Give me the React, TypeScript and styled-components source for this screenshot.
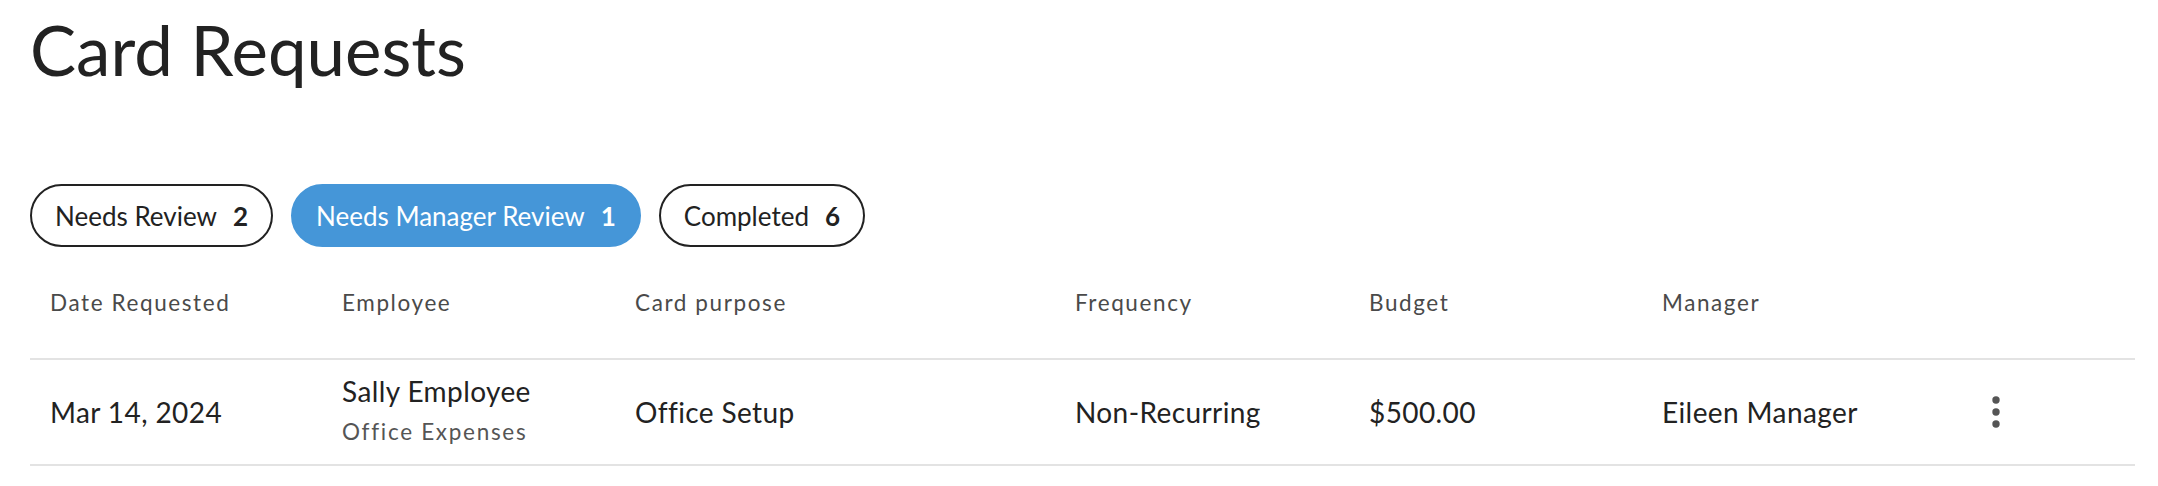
import React from "react";
import styled, { createGlobalStyle } from "styled-components";

const GlobalStyle = createGlobalStyle`
  html, body {
    margin: 0;
    padding: 0;
    background: #ffffff;
  }
  body {
    font-family: Lato, "Noto Sans", "Liberation Sans", sans-serif;
    color: #222222;
  }
`;

const Page = styled.div`
  padding: 8px 23px 0 30px;
`;

const Title = styled.h1`
  margin: 0;
  font-size: 69px;
  font-weight: 400;
  line-height: 83px;
  color: #222222;
  letter-spacing: 0;
`;

const Tabs = styled.div`
  display: flex;
  gap: 18px;
  margin-top: 93px;
`;

const Pill = styled.button<{ $active?: boolean }>`
  display: inline-flex;
  align-items: center;
  gap: 16px;
  height: 63px;
  box-sizing: border-box;
  padding: 0 23px;
  border-radius: 999px;
  border: 2px solid ${(p) => (p.$active ? "#4596d8" : "#222222")};
  background: ${(p) => (p.$active ? "#4596d8" : "#ffffff")};
  color: ${(p) => (p.$active ? "#ffffff" : "#222222")};
  font-family: inherit;
  font-size: 26px;
  font-weight: 400;
  cursor: pointer;
`;

const Count = styled.span`
  font-weight: 700;
`;

const Table = styled.div`
  display: grid;
  grid-template-columns: 292px 293px 440px 294px 293px 293px 1fr;
`;

const HeadCell = styled.div`
  display: flex;
  align-items: center;
  height: 111px;
  padding: 0 20px;
  font-size: 22.5px;
  letter-spacing: 1.6px;
  color: #4a4a4a;
  white-space: nowrap;
  border-bottom: 2px solid #e3e3e3;
`;

const Cell = styled.div`
  display: flex;
  flex-direction: column;
  justify-content: center;
  height: 104px;
  padding: 0 20px;
  font-size: 28px;
  letter-spacing: 0.4px;
  color: #222222;
  white-space: nowrap;
  border-bottom: 2px solid #e3e3e3;
`;

const Name = styled.div`
  line-height: 39px;
`;

const Sub = styled.div`
  font-size: 22.5px;
  letter-spacing: 1.7px;
  line-height: 41px;
  color: #555555;
`;

const MenuCell = styled.div`
  display: flex;
  align-items: center;
  height: 104px;
  padding-left: 37px;
  border-bottom: 2px solid #e3e3e3;
`;

const IconButton = styled.button`
  width: 48px;
  height: 48px;
  display: flex;
  align-items: center;
  justify-content: center;
  border: none;
  background: transparent;
  padding: 0;
  cursor: pointer;
`;

const KebabIcon = () => (
  <svg width="10" height="34" viewBox="0 0 10 34" aria-hidden="true">
    <circle cx="5" cy="5" r="3.7" fill="#555555" />
    <circle cx="5" cy="17" r="3.7" fill="#555555" />
    <circle cx="5" cy="29" r="3.7" fill="#555555" />
  </svg>
);

const tabs = [
  { label: "Needs Review", count: 2, active: false },
  { label: "Needs Manager Review", count: 1, active: true },
  { label: "Completed", count: 6, active: false },
];

const headers = ["Date Requested", "Employee", "Card purpose", "Frequency", "Budget", "Manager", ""];

export default function App() {
  return (
    <>
      <GlobalStyle />
      <Page>
        <Title>Card Requests</Title>
        <Tabs>
          {tabs.map((t) => (
            <Pill key={t.label} $active={t.active}>
              <span>{t.label}</span>
              <Count>{t.count}</Count>
            </Pill>
          ))}
        </Tabs>
        <Table>
          {headers.map((h, i) => (
            <HeadCell key={i}>{h}</HeadCell>
          ))}
          <Cell>Mar 14, 2024</Cell>
          <Cell>
            <Name>Sally Employee</Name>
            <Sub>Office Expenses</Sub>
          </Cell>
          <Cell>Office Setup</Cell>
          <Cell>Non-Recurring</Cell>
          <Cell>$500.00</Cell>
          <Cell>Eileen Manager</Cell>
          <MenuCell>
            <IconButton aria-label="More actions">
              <KebabIcon />
            </IconButton>
          </MenuCell>
        </Table>
      </Page>
    </>
  );
}
